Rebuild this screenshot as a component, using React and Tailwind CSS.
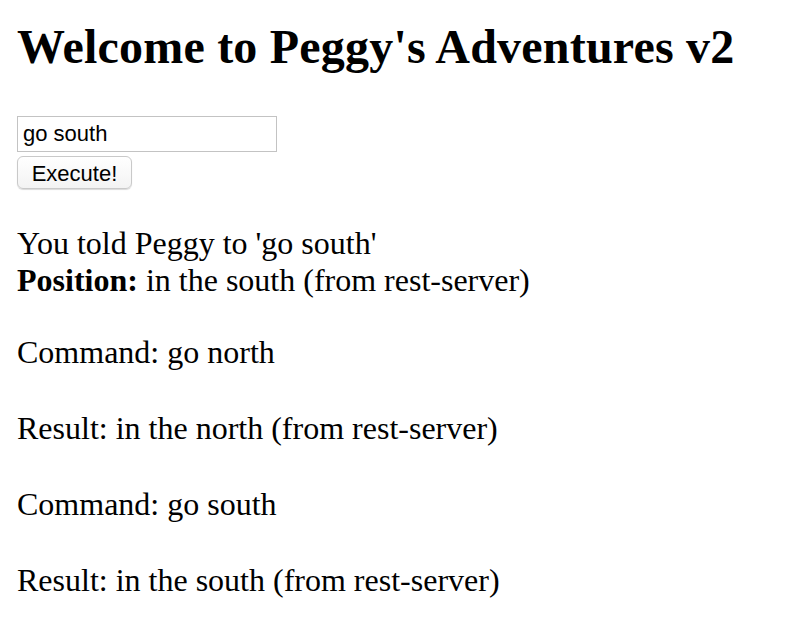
import React, { useState } from "react";

const history = [
    { label: "Command", value: "go north" },
    { label: "Result", value: "in the north (from rest-server)" },
    { label: "Command", value: "go south" },
    { label: "Result", value: "in the south (from rest-server)" },
];

const App = () => {
    const [command, setCommand] = useState("go south");

    return (
        <div className="min-h-screen bg-white text-black pl-[17px] pt-[19px] font-['Liberation_Serif',serif]">
            <h1 className="text-[48px] leading-[55px] font-bold tracking-[0.2px]">Welcome to Peggy's Adventures v2</h1>

            <div className="mt-[42px] flex flex-col items-start gap-[4px]">
                <input
                    type="text"
                    value={command}
                    onChange={(e) => setCommand(e.target.value)}
                    className="w-[260px] h-[36px] border border-[#c3c3c3] pl-[5px] text-[22px] font-['Liberation_Sans',sans-serif] outline-none"
                />
                <button
                    type="button"
                    className="w-[115px] h-[33px] rounded-[6px] border border-[#c9c9c9] bg-gradient-to-b from-white to-[#f3f3f3] shadow-[0_1px_1px_rgba(0,0,0,0.15)] text-[22px] font-['Liberation_Sans',sans-serif]"
                >
                    Execute!
                </button>
            </div>

            <div className="mt-[36px] text-[32px] leading-[37px]">
                <div>You told Peggy to 'go south'</div>
                <div>
                    <b>Position:</b> in the south (from rest-server)
                </div>
                {history.map((item, i) => (
                    <p key={i} className={i === 0 ? "mt-[35px]" : "mt-[39px]"}>
                        {item.label}: {item.value}
                    </p>
                ))}
            </div>
        </div>
    );
};

export default App;
